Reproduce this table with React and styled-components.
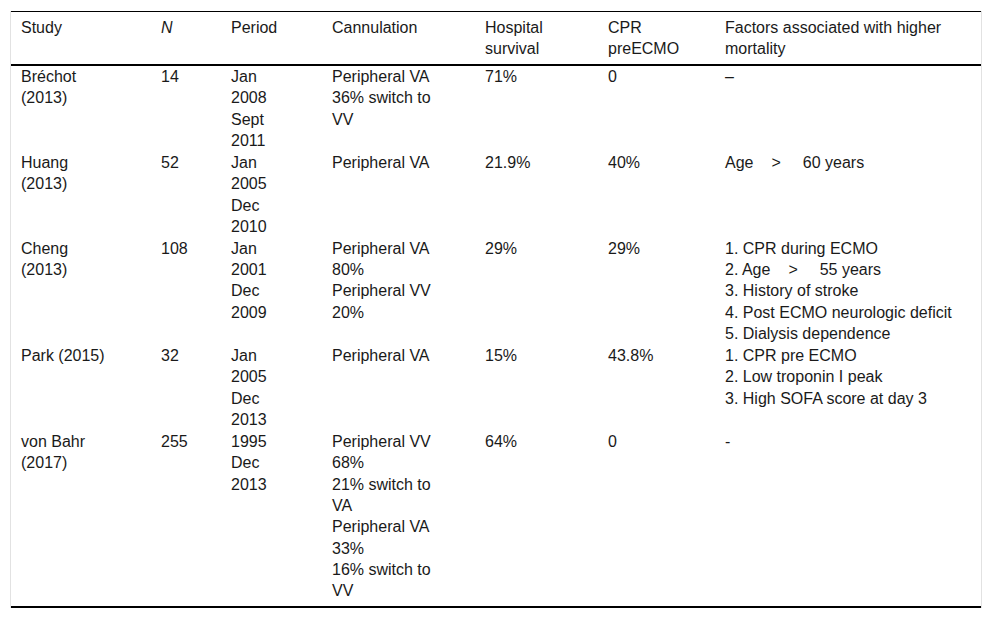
import React from 'react';
import styled, { createGlobalStyle } from 'styled-components';

const GlobalStyle = createGlobalStyle`
body{
  margin:0;
  background:#fff;
  font-family:"Liberation Sans", Arial, sans-serif;
}
`;

const Page = styled.div`
padding:11px 10px 0 10px;
`;

const Frame = styled.div`
border-left:1px solid #e2e2e2;
border-right:1px solid #e2e2e2;
`;

const Table = styled.table`
width:100%;
border-collapse:collapse;
table-layout:fixed;
font-size:16px;
line-height:21.3px;
color:#1a1a1a;
border-top:1px solid #000;
border-bottom:2px solid #000;
`;

const Head = styled.thead`
border-bottom:2px solid #000;
line-height:21px;
`;

const Th = styled.th`
text-align:left;
font-weight:normal;
vertical-align:top;
padding:5px 0 5px 10px;
font-style:${({ $italic }) => ($italic ? 'italic' : 'normal')};
`;

const Row = styled.tr`
&:first-child td{
  padding-top:0;
}
&:last-child td{
  padding-bottom:5px;
}
`;

const Td = styled.td`
vertical-align:top;
padding:0.75px 0 0 10px;
`;

const Line = styled.span`
display:block;
white-space:nowrap;
`;

const Gt = styled.span`
padding:0 22px 0 18px;
`;

const widths = [140, 70, 101, 153, 123, 117, 266];

function Lines({ items }) {
  return items.map((t, i) => <Line key={i}>{t}</Line>);
}

const age = (n, prefix) => (
  <>
    {prefix}Age<Gt>&gt;</Gt>{n} years
  </>
);

const rows = [
  {
    study: ['Bréchot', '(2013)'],
    n: '14',
    period: ['Jan', '2008', 'Sept', '2011'],
    cann: ['Peripheral VA', '36% switch to', 'VV'],
    surv: '71%',
    cpr: '0',
    factors: ['–'],
  },
  {
    study: ['Huang', '(2013)'],
    n: '52',
    period: ['Jan', '2005', 'Dec', '2010'],
    cann: ['Peripheral VA'],
    surv: '21.9%',
    cpr: '40%',
    factors: [age(60, '')],
  },
  {
    study: ['Cheng', '(2013)'],
    n: '108',
    period: ['Jan', '2001', 'Dec', '2009'],
    cann: ['Peripheral VA', '80%', 'Peripheral VV', '20%'],
    surv: '29%',
    cpr: '29%',
    factors: [
      '1. CPR during ECMO',
      age(55, '2. '),
      '3. History of stroke',
      '4. Post ECMO neurologic deficit',
      '5. Dialysis dependence',
    ],
  },
  {
    study: ['Park (2015)'],
    n: '32',
    period: ['Jan', '2005', 'Dec', '2013'],
    cann: ['Peripheral VA'],
    surv: '15%',
    cpr: '43.8%',
    factors: ['1. CPR pre ECMO', '2. Low troponin I peak', '3. High SOFA score at day 3'],
  },
  {
    study: ['von Bahr', '(2017)'],
    n: '255',
    period: ['1995', 'Dec', '2013'],
    cann: ['Peripheral VV', '68%', '21% switch to', 'VA', 'Peripheral VA', '33%', '16% switch to', 'VV'],
    surv: '64%',
    cpr: '0',
    factors: ['-'],
  },
];

export default function App() {
  return (
    <Page>
      <GlobalStyle />
      <Frame>
        <Table>
          <colgroup>
            {widths.map((w, i) => <col key={i} style={{ width: w }} />)}
          </colgroup>
          <Head>
            <tr>
              <Th>Study</Th>
              <Th $italic>N</Th>
              <Th>Period</Th>
              <Th>Cannulation</Th>
              <Th><Lines items={['Hospital', 'survival']} /></Th>
              <Th><Lines items={['CPR', 'preECMO']} /></Th>
              <Th><Lines items={['Factors associated with higher', 'mortality']} /></Th>
            </tr>
          </Head>
          <tbody>
            {rows.map((r, i) => (
              <Row key={i}>
                <Td><Lines items={r.study} /></Td>
                <Td>{r.n}</Td>
                <Td><Lines items={r.period} /></Td>
                <Td><Lines items={r.cann} /></Td>
                <Td>{r.surv}</Td>
                <Td>{r.cpr}</Td>
                <Td><Lines items={r.factors} /></Td>
              </Row>
            ))}
          </tbody>
        </Table>
      </Frame>
    </Page>
  );
}
